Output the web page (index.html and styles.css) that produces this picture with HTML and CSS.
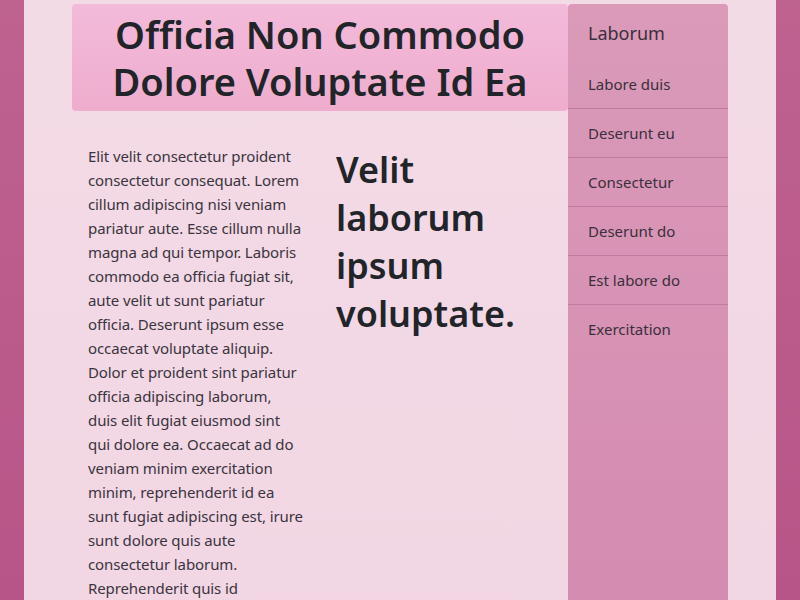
FILE: index.html
```html
<!DOCTYPE html>
<html lang="en">
<head>
<meta charset="utf-8">
<title>Officia</title>
<link rel="stylesheet" href="styles.css">
</head>
<body>
<div class="page">
  <div class="layout">
    <main class="main">
      <header class="banner">
        <h1 class="title">Officia Non Commodo Dolore Voluptate Id Ea</h1>
      </header>
      <div class="row">
        <div class="col">
          <p class="text">Elit velit consectetur proident consectetur consequat. Lorem cillum adipiscing nisi veniam pariatur aute. Esse cillum nulla magna ad qui tempor. Laboris commodo ea officia fugiat sit, aute velit ut sunt pariatur officia. Deserunt ipsum esse occaecat voluptate aliquip. Dolor et proident sint pariatur officia adipiscing laborum, duis elit fugiat eiusmod sint qui dolore ea. Occaecat ad do veniam minim exercitation minim, reprehenderit id ea sunt fugiat adipiscing est, irure sunt dolore quis aute consectetur laborum. Reprehenderit quis id deserunt velit ipsum.</p>
        </div>
        <div class="col">
          <h2 class="heading">Velit laborum ipsum voluptate.</h2>
        </div>
      </div>
    </main>
    <aside class="sidebar">
      <div class="side-title">Laborum</div>
      <ul class="nav">
        <li class="nav-item">Labore duis</li>
        <li class="nav-item">Deserunt eu</li>
        <li class="nav-item">Consectetur</li>
        <li class="nav-item">Deserunt do</li>
        <li class="nav-item">Est labore do</li>
        <li class="nav-item">Exercitation</li>
      </ul>
    </aside>
  </div>
</div>
</body>
</html>
```

FILE: styles.css
```css
html, body {
  margin: 0;
  padding: 0;
  height: 100%;
}
body {
  background: linear-gradient(to bottom, #be6290, #b85588);
  font-family: "Noto Sans", "Open Sans", sans-serif;
  color: #212529;
  overflow: hidden;
}
.page {
  margin: 0 24px;
  min-height: 100%;
  background: linear-gradient(to bottom, #f3dbe6, #f2d6e3);
  padding: 4px 48px 0;
}
.layout {
  display: flex;
  align-items: stretch;
  min-height: 596px;
}
.main {
  flex: 1;
  min-width: 0;
}
.banner {
  background: linear-gradient(to bottom, #f3bada, #efadcd);
  border-radius: 4px;
  height: 107px;
  display: flex;
  align-items: center;
  justify-content: center;
}
.title {
  margin: 0;
  font-size: 38px;
  font-weight: 600;
  line-height: 47px;
  text-align: center;
}
.row {
  display: grid;
  grid-template-columns: 1fr 1fr;
  padding-top: 33px;
}
.col {
  padding: 0 16px;
}
.text {
  margin: 0;
  font-size: 15px;
  letter-spacing: -0.1px;
  line-height: 24px;
  color: #3a3440;
}
.heading {
  margin: 0;
  padding-top: 2px;
  font-size: 36px;
  font-weight: 600;
  line-height: 48px;
}
.sidebar {
  width: 160px;
  flex: none;
  background: linear-gradient(to bottom, #da9ab8, #d48bb0);
  border-radius: 4px 4px 0 0;
  color: #3a2f3c;
}
.side-title {
  font-size: 18px;
  height: 56px;
  padding: 0 20px;
  line-height: 58px;
}
.nav {
  list-style: none;
  margin: 0;
  padding: 0;
}
.nav-item {
  height: 48px;
  line-height: 48px;
  padding: 0 20px;
  font-size: 15px;
  border-bottom: 1px solid #c47a9f;
}
.nav-item:last-child {
  border-bottom: none;
}
```
